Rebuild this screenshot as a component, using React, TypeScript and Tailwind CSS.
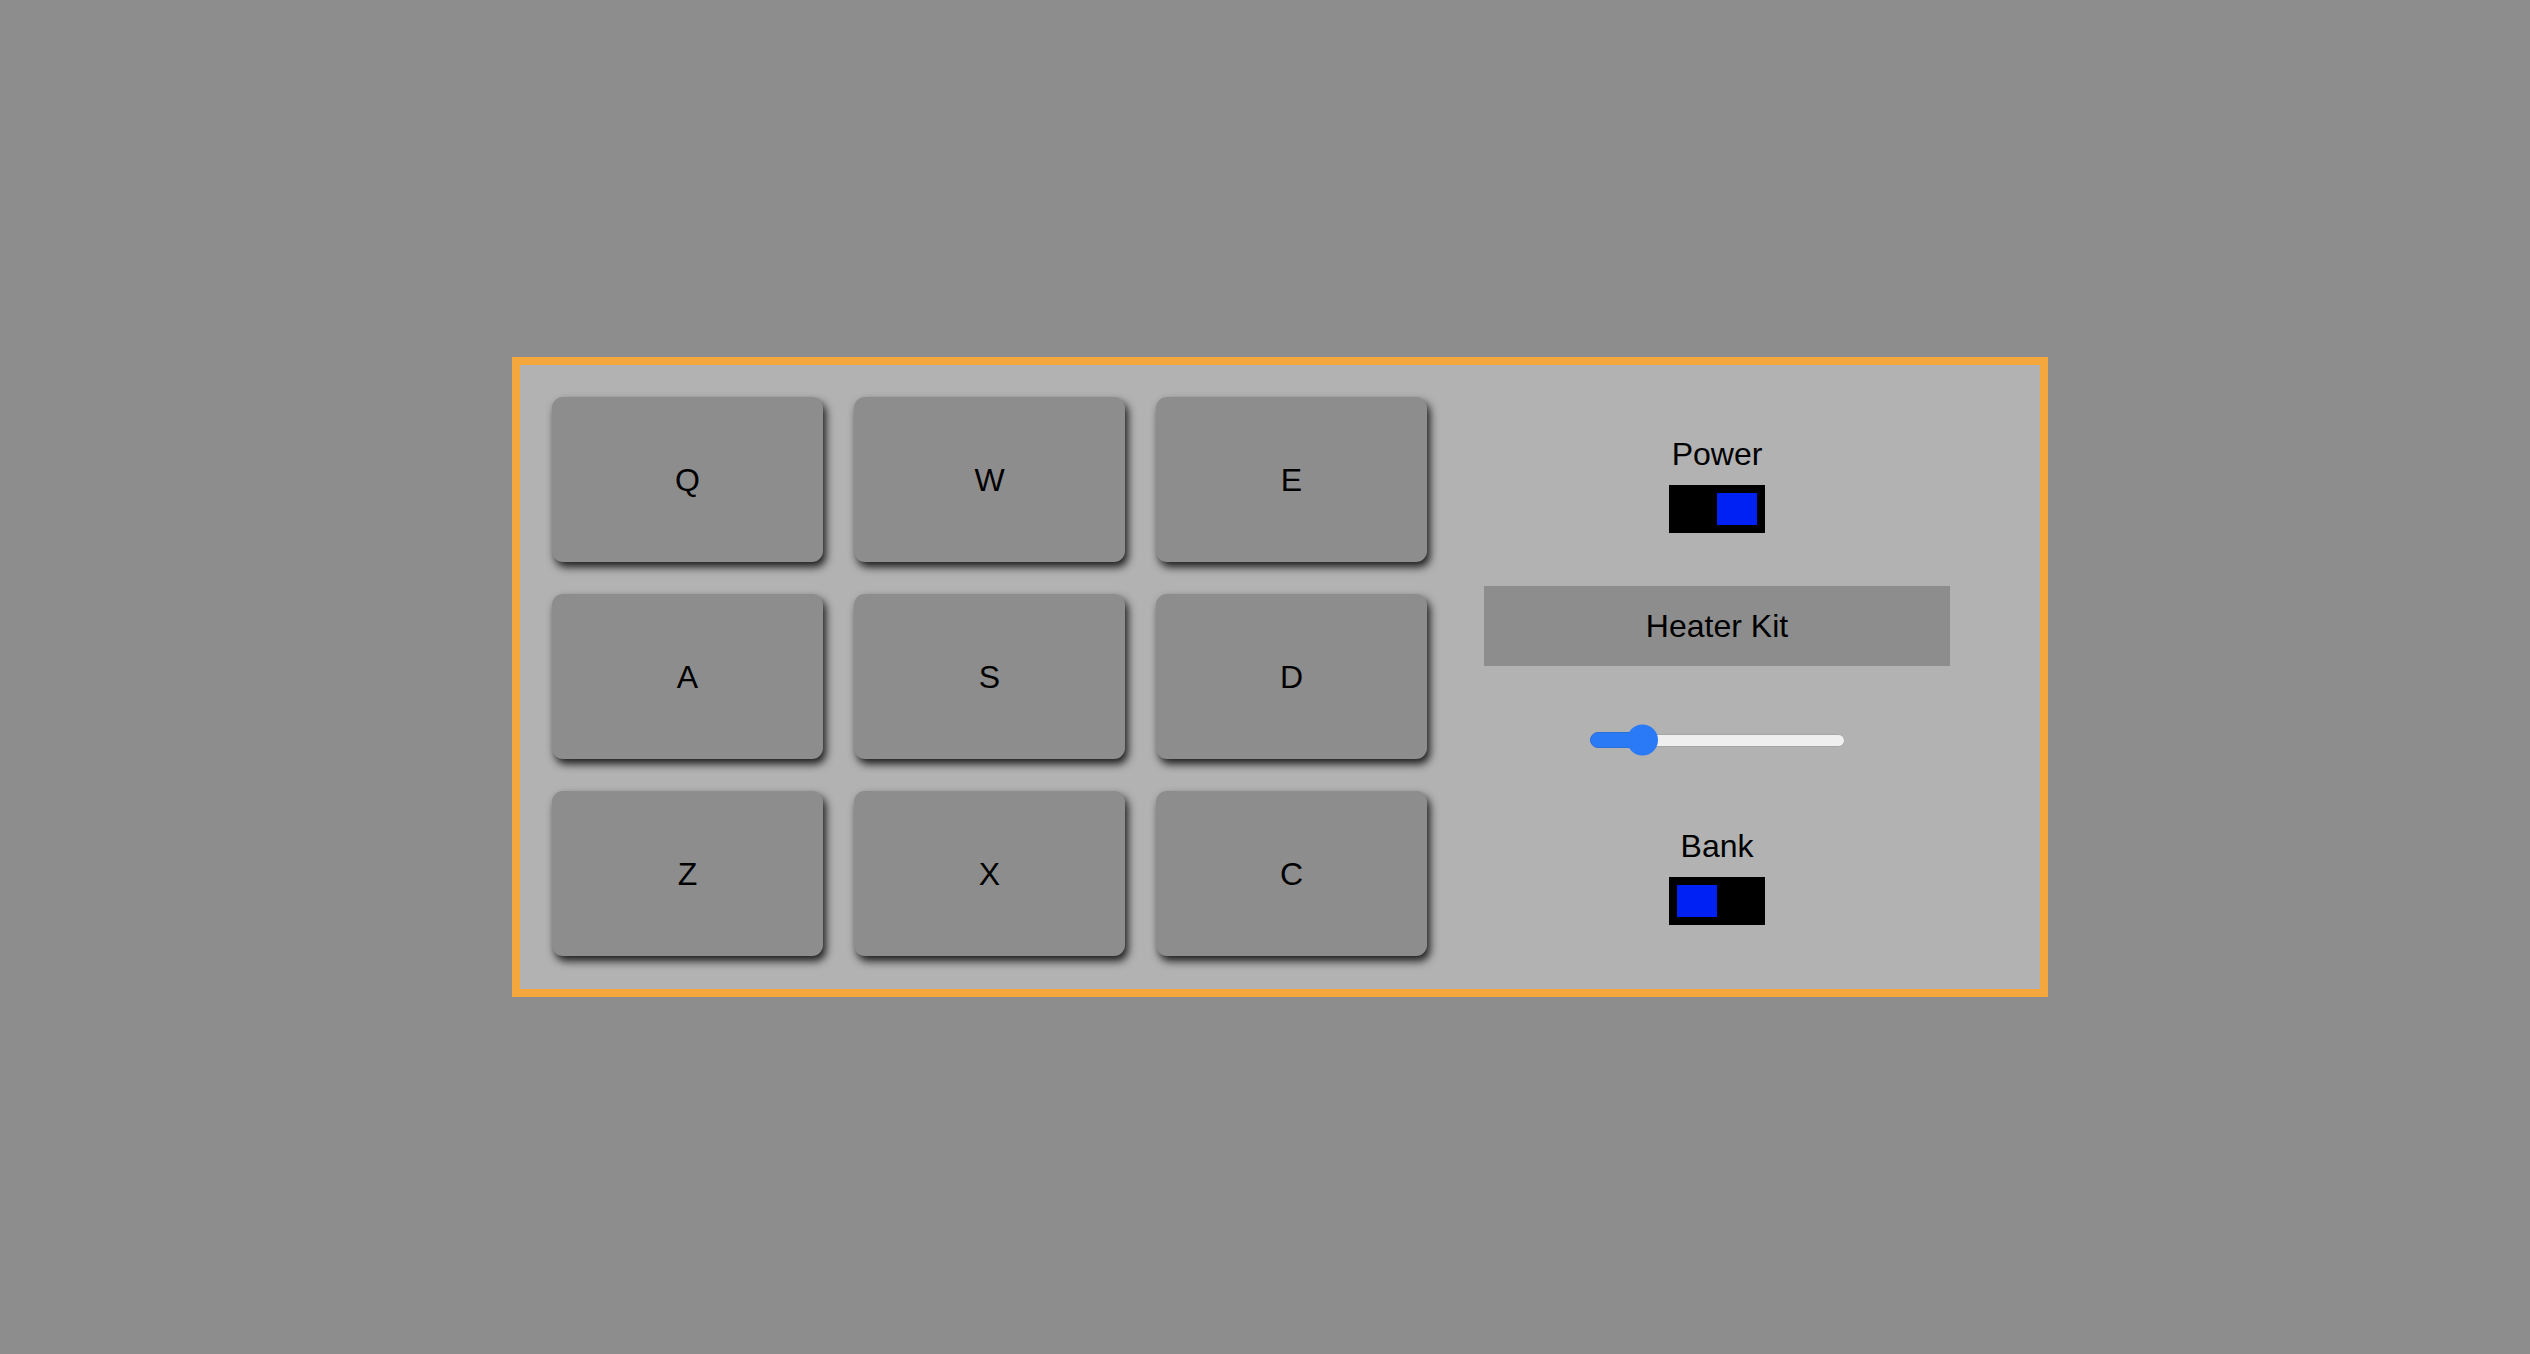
import { useState } from 'react';

const KEYS = ['Q', 'W', 'E', 'A', 'S', 'D', 'Z', 'X', 'C'];

function Toggle({ on, onClick }: { on: boolean; onClick: () => void }) {
  return (
    <button
      onClick={onClick}
      className={`mt-[15px] flex h-[48px] w-[96px] bg-black p-[8px] ${on ? 'justify-end' : 'justify-start'}`}
    >
      <span className="block h-[32px] w-[40px] bg-[#0021f3]" />
    </button>
  );
}

export default function App() {
  const [power, setPower] = useState(true);
  const [bank, setBank] = useState(false);
  const [volume] = useState(0.16);

  // track 255 wide, thumb 31 wide
  const thumbLeft = Math.round(volume * (255 - 31));

  return (
    <div
      className="flex min-h-screen items-center justify-center bg-[#8d8d8d] pl-[30px]"
      style={{ fontFamily: '"Liberation Sans", Arial, sans-serif' }}
    >
      <div className="flex h-[640px] w-[1536px] border-[8px] border-[#f3a73c] bg-[#b2b2b2] p-[32px]">
        <div className="grid grid-cols-[repeat(3,271px)] grid-rows-[repeat(3,165px)] gap-x-[31px] gap-y-[32px]">
          {KEYS.map((k) => (
            <button
              key={k}
              className="flex items-center justify-center rounded-[11px] bg-[#8d8d8d] text-[32px] leading-none text-black shadow-[3px_5px_8px_rgba(0,0,0,0.85)]"
            >
              {k}
            </button>
          ))}
        </div>

        <div className="ml-[57px] flex w-[466px] flex-col items-center pt-[41px]">
          <div className="text-[32px] leading-[32px] text-black">Power</div>
          <Toggle on={power} onClick={() => setPower(!power)} />

          <div className="mt-[53px] flex h-[80px] w-[466px] items-center justify-center bg-[#8d8d8d] text-[32px] leading-[32px] text-black">
            Heater Kit
          </div>

          <div className="mt-[58px] flex h-[32px] w-[255px] items-center">
            <div className="relative h-[13px] w-full rounded-full border border-[#a6a6a6] bg-[#efefef]">
              <div
                className="absolute left-[-1px] top-1/2 h-[16px] -translate-y-1/2 rounded-l-full border border-[#2a6fd9] bg-[#2a7af6]"
                style={{ width: thumbLeft + 16 }}
              />
              <div
                className="absolute top-1/2 h-[31px] w-[31px] -translate-y-1/2 rounded-full bg-[#2a7af7]"
                style={{ left: thumbLeft }}
              />
            </div>
          </div>

          <div className="mt-[74px] text-[32px] leading-[32px] text-black">Bank</div>
          <Toggle on={bank} onClick={() => setBank(!bank)} />
        </div>
      </div>
    </div>
  );
}
